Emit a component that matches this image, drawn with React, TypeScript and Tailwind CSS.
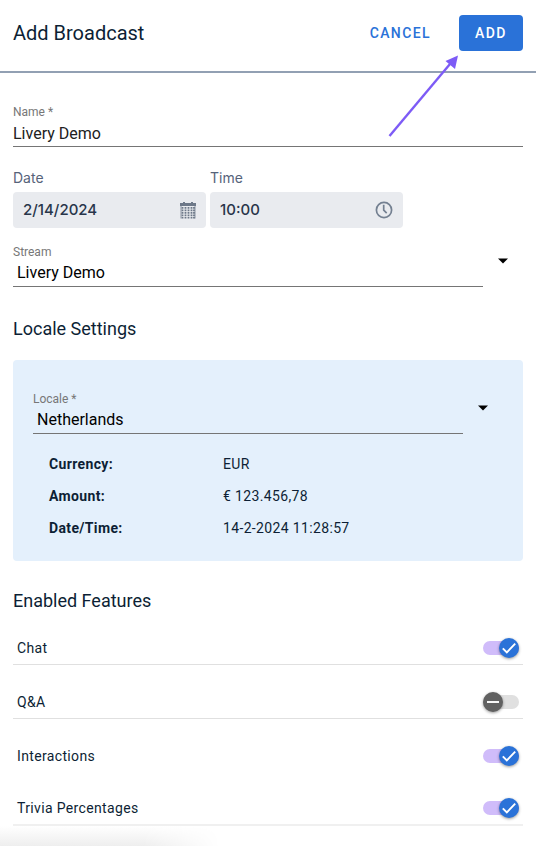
import { useState } from "react";
import type { ReactNode } from "react";

const features = [
  { id: "chat", label: "Chat", on: true, row: "border-b border-[#e0e0e0] h-[34px]" },
  { id: "qa", label: "Q&A", on: false, row: "border-b border-[#e0e0e0] h-[34px]" },
  { id: "interactions", label: "Interactions", on: true, row: "h-[33px]" },
  { id: "trivia", label: "Trivia Percentages", on: true, row: "border-b-2 border-[#f0f0f0] h-[34px]" },
];

const localeDetails = [
  { term: "Currency:", value: "EUR" },
  { term: "Amount:", value: "€ 123.456,78" },
  { term: "Date/Time:", value: "14-2-2024 11:28:57" },
];

function SelectField({ id, label, options }: { id: string; label: string; options: string[] }) {
  return (
    <div className="flex">
      <div className="flex flex-1 flex-col border-b border-[#757575]">
        <label htmlFor={id} className="text-xs leading-4 text-[#777777]">
          {label}
        </label>
        <select id={id} className="h-[26px] w-full appearance-none bg-transparent px-1 text-base text-black outline-none">
          {options.map((option) => (
            <option key={option}>{option}</option>
          ))}
        </select>
      </div>
      <svg viewBox="0 0 24 24" className="mt-1 mr-2 ml-2 size-6" aria-hidden="true">
        <path d="M7 10.500h10l-5 5z" fill="#000" />
      </svg>
    </div>
  );
}

function PickerField({ id, label, value, icon }: { id: string; label: string; value: string; icon: ReactNode }) {
  return (
    <div className="flex flex-1 flex-col gap-1 font-['Inter',sans-serif]">
      <label htmlFor={id} className="text-sm leading-5 text-[#56637a]">
        {label}
      </label>
      <div className="flex h-9 items-center rounded bg-[#e9ebef] px-[10px]">
        <input id={id} defaultValue={value} className="w-full min-w-0 bg-transparent text-[15px] font-medium text-[#28354a] outline-none" />
        {icon}
      </div>
    </div>
  );
}

function CalendarIcon() {
  return (
    <svg viewBox="0 0 16 18" className="h-[18px] w-4 shrink-0" aria-hidden="true">
      <path d="M0 2h3V1h2v1h6V1h2v1h3v3H0z" fill="#6d7888" />
      <path d="M1 5v12.500M15 5v12.500" stroke="#8a94a2" strokeWidth="1" />
      <path d="M2.500 6v11.500M5.500 6v11.500M8.500 6v11.500M11.500 6v11.500M14 6v11.500" stroke="#6d7888" strokeWidth="1.800" strokeDasharray="1.700 .8" />
    </svg>
  );
}

function ClockIcon() {
  return (
    <svg viewBox="0 0 18 18" className="size-[18px] shrink-0" fill="none" stroke="#748091" aria-hidden="true">
      <circle cx="9" cy="9" r="7.600" strokeWidth="1.700" />
      <path d="M8.700 3.800v5.400l3 3" strokeWidth="1.700" />
    </svg>
  );
}

function FeatureSwitch({ id, initial }: { id: string; initial: boolean }) {
  const [on, setOn] = useState(initial);
  return (
    <span className="relative flex h-5 w-9 items-center">
      <input
        id={id}
        type="checkbox"
        role="switch"
        checked={on}
        onChange={() => setOn(!on)}
        className="h-[14px] w-9 appearance-none rounded-full bg-[#e0e0e0] checked:bg-[#d0bcfa]"
      />
      <span
        className={
          on
            ? "pointer-events-none absolute right-0 size-5 rounded-full bg-[#2a72d8] shadow-[0_1px_3px_rgba(0,0,0,0.4)]"
            : "pointer-events-none absolute left-0 size-5 rounded-full bg-[#616161] shadow-[0_1px_3px_rgba(0,0,0,0.4)]"
        }
      >
        <svg viewBox="0 0 20 20" className="size-5" fill="none" stroke="#fff" strokeWidth="1.900" aria-hidden="true">
          <path d={on ? "M3.800 10.300l4 4 8.400-8.600" : "M4 10h12"} />
        </svg>
      </span>
    </span>
  );
}

export default function App() {
  return (
    <div className="bg-white font-['Roboto',sans-serif] text-[#0d1f35]">
      <header className="flex items-center border-b-2 border-[#92a0b3] px-[13px] pt-[15px] pb-5">
        <h1 className="flex-1 text-xl leading-7">Add Broadcast</h1>
        <button type="button" className="h-9 px-7 text-sm font-medium tracking-widest text-[#2a72d8]">
          CANCEL
        </button>
        <div className="relative">
          <button type="button" className="h-9 w-16 rounded bg-[#2a72d8] text-sm font-medium tracking-widest text-white">
            ADD
          </button>
          <svg viewBox="0 0 72 88" className="pointer-events-none absolute top-full right-full h-[88px] w-[72px]" aria-hidden="true">
            <path d="M2.500 85L63 13" stroke="#7d5bf6" strokeWidth="2.400" />
            <path d="M71 4.500L68 18 58.500 10z" fill="#7d5bf6" />
          </svg>
        </div>
      </header>

      <main className="px-[13px] pt-[31px]">
        <form onSubmit={(event) => event.preventDefault()}>
          <div className="flex flex-col border-b border-[#757575]">
            <label htmlFor="name" className="text-xs leading-4 text-[#777777]">
              Name *
            </label>
            <input id="name" defaultValue="Livery Demo" className="h-[26px] w-full bg-transparent text-base text-[#212121] outline-none" />
          </div>

          <div className="mt-[21px] mb-4 flex w-[390px] max-w-full gap-1">
            <PickerField id="date" label="Date" value="2/14/2024" icon={<CalendarIcon />} />
            <PickerField id="time" label="Time" value="10:00" icon={<ClockIcon />} />
          </div>

          <SelectField id="stream" label="Stream" options={["Livery Demo"]} />

          <h2 className="mt-7 text-lg leading-7">Locale Settings</h2>
          <section className="mt-[17px] rounded bg-[#e4f0fc] px-5 pt-[31px] pb-[17px]">
            <SelectField id="locale" label="Locale *" options={["Netherlands"]} />
            <dl className="mt-[14px] px-4 text-sm leading-8">
              {localeDetails.map(({ term, value }) => (
                <div key={term} className="flex tracking-wide">
                  <dt className="w-[174px] font-bold">{term}</dt>
                  <dd>{value}</dd>
                </div>
              ))}
            </dl>
          </section>

          <h2 className="mt-7 text-lg leading-6">Enabled Features</h2>
          <ul className="mt-[18px] flex flex-col gap-5">
            {features.map(({ id, label, on, row }) => (
              <li key={id} className={`flex items-center justify-between px-1 text-sm tracking-wide ${row}`}>
                <label htmlFor={id}>{label}</label>
                <FeatureSwitch id={id} initial={on} />
              </li>
            ))}
          </ul>
        </form>
      </main>
      <div className="h-5 w-[220px] bg-linear-to-b from-white to-[#eeeeee] [mask-image:linear-gradient(to_right,black_65%,transparent)]" />
    </div>
  );
}
